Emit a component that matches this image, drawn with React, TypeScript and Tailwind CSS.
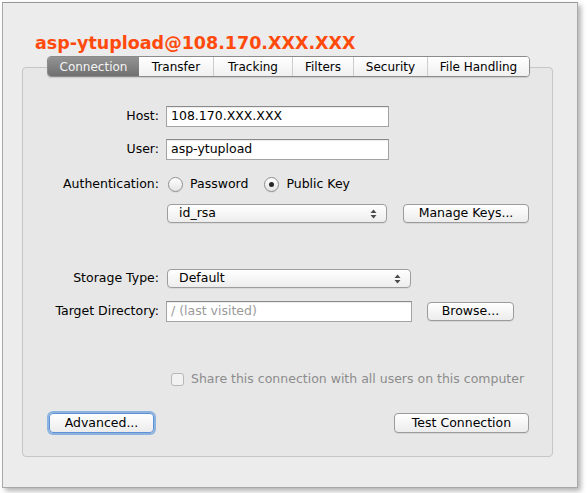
import type { ReactNode } from "react";
import clsx from "clsx";

const TABS = [
  { name: "Connection", w: "w-[91px]" },
  { name: "Transfer", w: "w-[74px]" },
  { name: "Tracking", w: "w-[79px]" },
  { name: "Filters", w: "w-[61px]" },
  { name: "Security", w: "w-[74px]" },
  { name: "File Handling", w: "w-[102px]" },
];

function Row({ label, children, className }: { label: string; children: ReactNode; className?: string }) {
  return (
    <div className={clsx("flex items-center", className)}>
      <div className="w-[136px] text-right">{label}</div>
      <div className="ml-[7px] flex items-center">{children}</div>
    </div>
  );
}

function TextField({ value, placeholder, className }: { value?: string; placeholder?: string; className?: string }) {
  return (
    <div
      className={clsx(
        "flex h-[21px] items-center border border-[#a3a3a3] border-t-[#8a8a8a] bg-white pl-[4px] shadow-[inset_0_1px_1px_rgba(0,0,0,0.08)]",
        className
      )}
    >
      {value ? <span className="text-black">{value}</span> : <span className="text-[#9a9a9a]">{placeholder}</span>}
    </div>
  );
}

function Stepper() {
  return (
    <svg width="7" height="10" viewBox="0 0 7 10" className="shrink-0">
      <path d="M0.5 4 L3.5 0.5 L6.5 4 Z" fill="#4a4a4a" />
      <path d="M0.5 6 L3.5 9.5 L6.5 6 Z" fill="#4a4a4a" />
    </svg>
  );
}

function Popup({ value, className }: { value: string; className?: string }) {
  return (
    <div
      className={clsx(
        "flex h-[19px] items-center justify-between rounded-[4px] border border-[#9d9d9d] bg-linear-to-b from-white to-[#ededed] pl-[11px] pr-[9px] shadow-[0_1px_0_rgba(0,0,0,0.06)]",
        className
      )}
    >
      <span>{value}</span>
      <Stepper />
    </div>
  );
}

function Button({ children, className, focused }: { children: ReactNode; className?: string; focused?: boolean }) {
  return (
    <div
      className={clsx(
        "flex items-center justify-center rounded-[4px] border bg-linear-to-b from-white to-[#ececec] text-black",
        focused
          ? "border-[#5f91d4] shadow-[0_0_0_2px_rgba(110,160,222,0.75)]"
          : "border-[#9b9b9b] shadow-[0_1px_0_rgba(0,0,0,0.07)]",
        className
      )}
    >
      {children}
    </div>
  );
}

function Radio({ checked, label }: { checked?: boolean; label: string }) {
  return (
    <div className="flex items-center">
      <div className="flex h-[15px] w-[15px] items-center justify-center rounded-full border border-[#8e8e8e] bg-linear-to-b from-white to-[#e4e4e4] shadow-[0_1px_0_rgba(0,0,0,0.06)]">
        {checked && <div className="h-[5px] w-[5px] rounded-full bg-[#262626]" />}
      </div>
      <span className="ml-[7px]">{label}</span>
    </div>
  );
}

export default function App() {
  return (
    <div className="h-[493px] w-[587px] bg-white pl-[2px] pt-[2px] font-['DejaVu_Sans',sans-serif] text-[12.5px] text-black">
      <div className="h-[486px] w-[576px] border border-[#a9a9a9] border-t-[#979797] bg-[#ececec] shadow-[3px_3px_5px_rgba(0,0,0,0.3)]">
        <h1 className="ml-[32px] mt-[30px] text-[17.5px] font-bold leading-[20px] text-[#ff4a0c]">
          asp-ytupload@108.170.XXX.XXX
        </h1>

        <div className="ml-[19px] mt-[14px] w-[531px] rounded-[4px] border border-[#c6c6c6] bg-[#e7e7e7] pb-[23px]">
          {/* segmented tab bar sits across the group box's top edge */}
          <div className="-mt-[12px] ml-[24px] flex h-[21px] w-[483px] overflow-hidden rounded-[4px] border border-[#8b8b8b] text-[12px] shadow-[0_1px_1px_rgba(0,0,0,0.12)]">
            {TABS.map((t, i) => (
              <div
                key={t.name}
                className={clsx(
                  "flex items-center justify-center",
                  t.w,
                  i === 0
                    ? "bg-linear-to-b from-[#939393] to-[#707070] text-[#f4f4f4]"
                    : "bg-linear-to-b from-white to-[#f0f0f0] text-black",
                  i > 1 && "border-l border-[#cdcdcd]"
                )}
              >
                {t.name}
              </div>
            ))}
          </div>

          <Row label="Host:" className="mt-[29px] h-[21px]">
            <TextField value="108.170.XXX.XXX" className="w-[223px]" />
          </Row>
          <Row label="User:" className="mt-[12px] h-[21px]">
            <TextField value="asp-ytupload" className="w-[223px]" />
          </Row>
          <Row label="Authentication:" className="mt-[14px] h-[20px]">
            <div className="ml-[2px] flex items-center gap-[16px]">
              <Radio label="Password" />
              <Radio label="Public Key" checked />
            </div>
          </Row>
          <div className="ml-[144px] mt-[10px] flex h-[19px] items-center">
            <Popup value="id_rsa" className="w-[220px]" />
            <Button className="ml-[16px] h-[19px] w-[126px]">Manage Keys...</Button>
          </div>

          <Row label="Storage Type:" className="mt-[46px] h-[19px]">
            <Popup value="Default" className="ml-[1px] w-[244px]" />
          </Row>
          <Row label="Target Directory:" className="mt-[13px] h-[21px]">
            <TextField placeholder="/ (last visited)" className="w-[246px]" />
            <Button className="ml-[15px] h-[19px] w-[87px]">Browse...</Button>
          </Row>

          <div className="ml-[148px] mt-[50px] flex h-[14px] items-center text-[#8c8c8c]">
            <div className="h-[13px] w-[13px] rounded-[3px] border border-[#b7b7b7] bg-[#f2f2f2]" />
            <span className="ml-[7px]">Share this connection with all users on this computer</span>
          </div>

          <div className="ml-[26px] mr-[23px] mt-[27px] flex h-[20px] items-center justify-between">
            <Button focused className="h-[20px] w-[105px]">
              Advanced...
            </Button>
            <Button className="h-[20px] w-[135px]">Test Connection</Button>
          </div>
        </div>
      </div>
    </div>
  );
}
